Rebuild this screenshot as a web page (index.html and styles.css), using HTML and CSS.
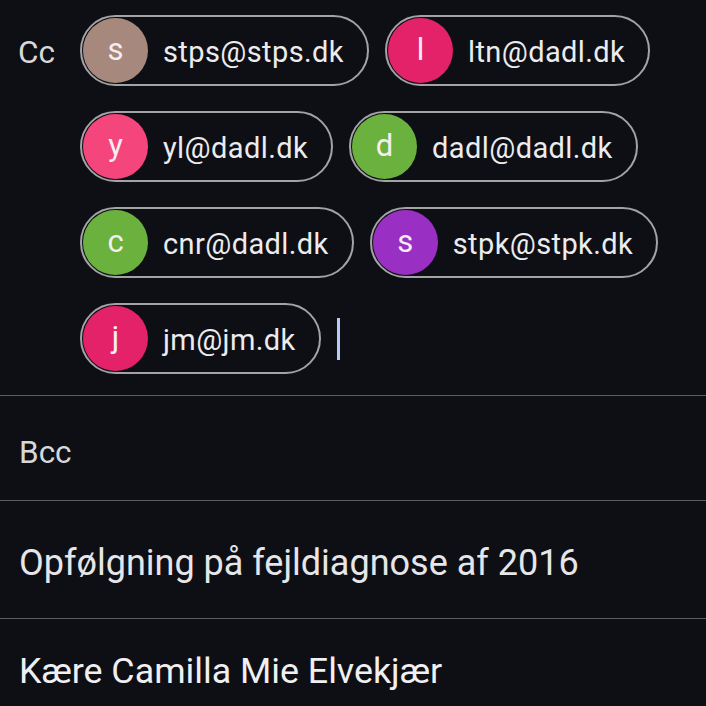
FILE: index.html
```html
<!DOCTYPE html>
<html lang="da">
<head>
<meta charset="utf-8">
<title>Compose</title>
<link rel="stylesheet" href="styles.css">
</head>
<body>
<main class="compose">
  <section class="field cc">
    <div class="label">Cc</div>
    <div class="chips">
      <span class="chip"><span class="avatar brown">s</span><span class="addr">stps@stps.dk</span></span>
      <span class="chip"><span class="avatar pink">l</span><span class="addr">ltn@dadl.dk</span></span>
      <span class="chip"><span class="avatar rose">y</span><span class="addr">yl@dadl.dk</span></span>
      <span class="chip"><span class="avatar green">d</span><span class="addr">dadl@dadl.dk</span></span>
      <span class="chip"><span class="avatar green">c</span><span class="addr">cnr@dadl.dk</span></span>
      <span class="chip"><span class="avatar purple">s</span><span class="addr">stpk@stpk.dk</span></span>
      <span class="chip-line"><span class="chip"><span class="avatar pink">j</span><span class="addr">jm@jm.dk</span></span><span class="caret"></span></span>
    </div>
  </section>
  <section class="field bcc"><div class="label">Bcc</div></section>
  <section class="field subject">Opfølgning på fejldiagnose af 2016</section>
  <section class="body-text">Kære Camilla Mie Elvekjær</section>
</main>
</body>
</html>
```
FILE: styles.css
```css
* { box-sizing: border-box; }
html, body {
  margin: 0;
  padding: 0;
  background: #0e0f15;
}
body {
  color: #e6e6e8;
  font-family: Roboto, "Noto Sans", sans-serif;
  width: 706px;
  height: 706px;
  overflow: hidden;
}
.compose {
  display: flex;
  flex-direction: column;
}
.field {
  border-bottom: 1px solid #5b5d63;
  padding-left: 19px;
}
.label {
  font-size: 31.5px;
  color: #d8d8da;
}
.cc {
  display: flex;
  padding-top: 15px;
  padding-bottom: 21px;
}
.cc .label {
  width: 62px;
  flex: none;
  height: 71px;
  line-height: 75px;
  margin-left: -1px;
}
.chips {
  display: flex;
  flex-wrap: wrap;
  column-gap: 16px;
  row-gap: 25px;
  flex: 1;
}
.chip-line {
  display: flex;
  align-items: center;
  gap: 16px;
}
.chip {
  display: inline-flex;
  align-items: center;
  height: 71px;
  border: 2px solid #a3a3a6;
  border-radius: 36px;
  padding: 0 23px 0 1px;
}
.avatar {
  width: 65px;
  height: 65px;
  border-radius: 50%;
  display: flex;
  align-items: center;
  justify-content: center;
  font-size: 31px;
  color: #f6eef2;
  margin-right: 15px;
  padding-bottom: 3px;
}
.addr {
  font-size: 29px;
  color: #ececee;
  letter-spacing: 0.4px;
  padding-top: 2px;
}
.brown { background: #a6887c; }
.pink { background: #e3226a; }
.rose { background: #f5457d; }
.green { background: #6bb13d; }
.purple { background: #9a2fc4; }
.caret {
  width: 3px;
  height: 42px;
  background: #b5cdf6;
}
.bcc {
  height: 105px;
  display: flex;
  align-items: center;
  padding-top: 8px;
}
.subject {
  height: 118px;
  display: flex;
  align-items: center;
  font-size: 36px;
  padding-top: 6px;
}
.body-text {
  padding-left: 19px;
  padding-top: 31px;
  font-size: 35.8px;
  color: #f0f0f2;
}
```
